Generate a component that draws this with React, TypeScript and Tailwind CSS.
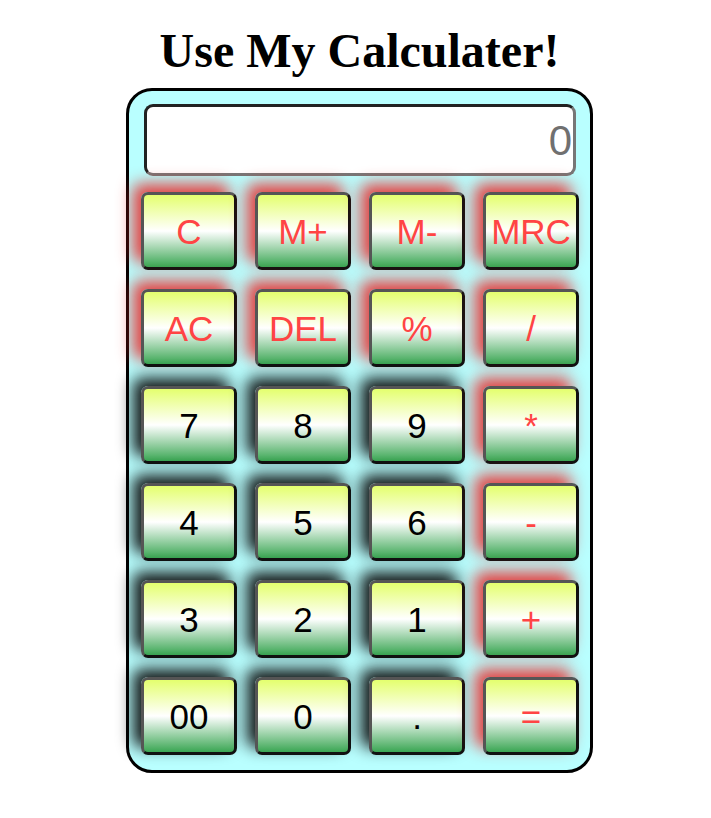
import React from "react";

type Key = { label: string; op?: boolean };

const keys: Key[] = [
  { label: "C", op: true },
  { label: "M+", op: true },
  { label: "M-", op: true },
  { label: "MRC", op: true },
  { label: "AC", op: true },
  { label: "DEL", op: true },
  { label: "%", op: true },
  { label: "/", op: true },
  { label: "7" },
  { label: "8" },
  { label: "9" },
  { label: "*", op: true },
  { label: "4" },
  { label: "5" },
  { label: "6" },
  { label: "-", op: true },
  { label: "3" },
  { label: "2" },
  { label: "1" },
  { label: "+", op: true },
  { label: "00" },
  { label: "0" },
  { label: "." },
  { label: "=", op: true },
];

const CalcButton = ({ k }: { k: Key }) => (
  <button
    className={
      "h-[78px] w-[96px] rounded-[7px] border-[3px] border-t-[#555] border-l-[#555] border-r-[#111] border-b-[#111] bg-[linear-gradient(to_bottom,#e4ff6e_0%,#ffffff_50%,#3aa653_100%)] text-[35px] leading-none font-['Liberation_Sans',Arial,sans-serif] " +
      (k.op
        ? "text-[#ff4444] shadow-[-8px_-8px_16px_rgba(235,30,30,0.85)]"
        : "text-black shadow-[-8px_-8px_16px_rgba(10,10,10,0.95)]")
    }
  >
    {k.label}
  </button>
);

export default function App() {
  return (
    <div className="min-h-screen bg-white pl-2 flex flex-col items-center">
      <h1 className="mt-[23px] mb-[9px] text-[48px] leading-[56px] font-bold text-black font-['Liberation_Serif','Times_New_Roman',serif]">
        Use My Calculater!
      </h1>

      {/* Body */}
      <div className="w-[467px] rounded-[26px] border-[3px] border-black bg-[#b9ffff] pt-[13px] pl-[12px] pr-[11px] pb-[15px]">
        <div className="ml-[3px] mr-[3px] h-[72px] rounded-[9px] border-[3px] border-t-[#222] border-l-[#222] border-r-[#777] border-b-[#777] bg-white flex items-center justify-end pr-[1px]">
          <span className="text-[42px] text-[#707070] font-['Liberation_Sans',Arial,sans-serif]">0</span>
        </div>

        <div className="mt-[16px] grid grid-cols-[repeat(4,96px)] gap-x-[18px] gap-y-[19px]">
          {keys.map((k) => (
            <CalcButton key={k.label} k={k} />
          ))}
        </div>
      </div>
    </div>
  );
}
